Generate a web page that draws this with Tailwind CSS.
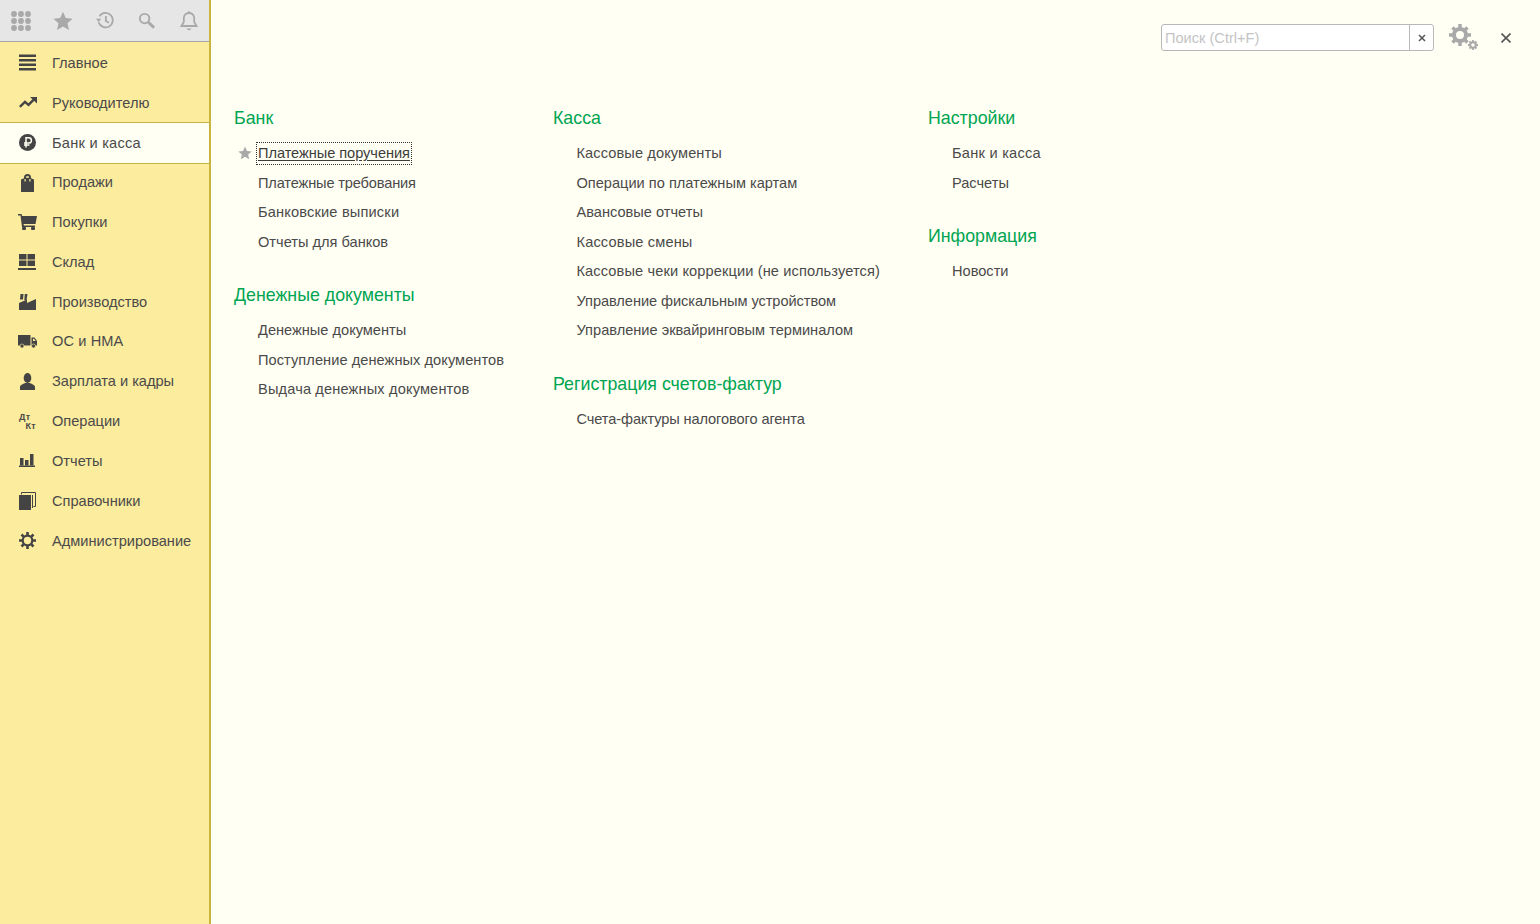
<!DOCTYPE html>
<html lang="ru">
  <head>
    <meta charset="UTF-8" />
    <meta name="viewport" content="width=device-width, initial-scale=1.0" />
    <title>Банк и касса</title>
    <script src="https://cdn.jsdelivr.net/npm/@tailwindcss/browser@4"></script>
  </head>
  <body class="h-[924px] w-[1540px] overflow-hidden bg-[#fffff4] font-['Liberation_Sans',Arial,sans-serif] text-[14.6px] text-[#4b4a4a]">
    <div class="flex h-full">
      <!-- Sidebar -->
      <aside class="flex h-full w-[211px] shrink-0 flex-col border-r-2 border-[#c9b43f] bg-[#fbec9e]">
        <div class="flex h-[42px] items-center border-b border-[#a5a5a5] bg-[#e6e6e6] text-[#a9a9a9]">
          <svg class="ml-[11px] h-[20px] w-[20px]" viewBox="0 0 20 20" fill="currentColor">
            <circle cx="3" cy="3" r="2.9"/><circle cx="10" cy="3" r="2.9"/><circle cx="17" cy="3" r="2.9"/>
            <circle cx="3" cy="10" r="2.9"/><circle cx="10" cy="10" r="2.9"/><circle cx="17" cy="10" r="2.9"/>
            <circle cx="3" cy="17" r="2.9"/><circle cx="10" cy="17" r="2.9"/><circle cx="17" cy="17" r="2.9"/>
          </svg>
          <svg class="ml-[22px] h-[20px] w-[20px]" viewBox="0 0 20 20" fill="currentColor"><path d="M10 .8l2.8 6.3 6.8.7-5.100 4.500 1.500 6.700L10 15.500l-6 3.500 1.500-6.700L.4 7.800l6.800-.7z"/></svg>
          <svg class="ml-[22px] h-[19px] w-[19px]" viewBox="0 0 21 20" fill="none" stroke="currentColor" stroke-width="2"><path d="M5 5.200A8 8 0 1 1 4 12"/><path d="M12 5v5.500l3.500 2"/><path d="M1 8.200h6L4 11.600z" fill="currentColor" stroke="none"/></svg>
          <svg class="ml-[24px] h-[17px] w-[18px]" viewBox="0 0 19 18" fill="none" stroke="currentColor"><circle cx="7" cy="7" r="5" stroke-width="2"/><path d="M11 11l6 5.500" stroke-width="3"/></svg>
          <svg class="ml-[24px] h-[20px] w-[18px]" viewBox="0 0 18 20" fill="none" stroke="currentColor" stroke-width="1.800"><path d="M9 2c-3.500 0-5.200 2.500-5.200 5.500v3.500L1.500 15h15l-2.300-4V7.500C14.200 4.500 12.500 2 9 2z"/><path d="M6.500 17.500a2.700 2.700 0 0 0 5 0z" fill="currentColor" stroke="none"/><circle cx="9" cy="1.500" r="1.300" fill="currentColor" stroke="none"/></svg>
        </div>
        <nav class="flex flex-col pt-[1px]">
          <a class="flex h-[39.800px] items-center">
            <svg class="ml-[19px] h-[17px] w-[17px] text-[#444]" viewBox="0 0 17 17" fill="currentColor"><rect y="0.500" width="17" height="2.500"/><rect y="5" width="17" height="2.500"/><rect y="9.500" width="17" height="2.500"/><rect y="14" width="17" height="2.500"/></svg>
            <span class="ml-[16px] pt-[2px]">Главное</span>
          </a>
          <a class="flex h-[39.400px] items-center">
            <svg class="ml-[19px] h-[11px] w-[18px] text-[#444]" viewBox="0 0 18 11" fill="none" stroke="currentColor" stroke-width="2.400"><path d="M.8 9.800L6 4.800l3.500 3 5-5"/><path d="M11 0h7v6.500z" fill="currentColor" stroke="none"/></svg>
            <span class="ml-[15px] pt-[2px]">Руководителю</span>
          </a>
          <a class="flex h-[41.400px] items-center border-y border-[#c9b43f] bg-[#fffff4]">
            <svg class="ml-[19px] h-[17px] w-[17px]" viewBox="0 0 17 17"><circle cx="8.500" cy="8.500" r="8.500" fill="#444"/><path d="M7 13.500V3.800h2.800a2.500 2.500 0 0 1 0 5.200H5M5 11h5.500" fill="none" stroke="#fffff4" stroke-width="1.500"/></svg>
            <span class="ml-[16px] pt-[2px] tracking-[0.25px]">Банк и касса</span>
          </a>
          <a class="flex h-[38.600px] items-center">
            <svg class="ml-[20px] h-[18px] w-[15px] text-[#444]" viewBox="0 0 15 18" fill="currentColor"><path d="M1 5.500l3-1.200V3.500a3.500 3.500 0 0 1 7 0v.8l3 1.200V18H1zM5.800 3.700l3.400 0a1.700 1.700 0 0 0-3.400 0z" fill-rule="evenodd"/><path d="M4.500 5v2.500h1.200V5zM9.300 5v2.500h1.200V5z" fill="#fbec9e"/></svg>
            <span class="ml-[17px]">Продажи</span>
          </a>
          <a class="flex h-[39.800px] items-center">
            <svg class="ml-[18px] h-[16px] w-[19px] text-[#444]" viewBox="0 0 19 16" fill="currentColor"><path d="M0 0h3.500l.7 2H19l-1.500 8H5.500L6 11.500h11V13H4L2.500 1.500H0z"/><rect x="4" y="13" width="4" height="3" rx="1"/><rect x="13" y="13" width="4" height="3" rx="1"/></svg>
            <span class="ml-[15px] pt-[2px] tracking-[0.1px]">Покупки</span>
          </a>
          <a class="flex h-[39.800px] items-center">
            <svg class="ml-[18px] h-[16px] w-[18px] text-[#444]" viewBox="0 0 18 16" fill="currentColor"><rect x="1" width="7.500" height="5.500"/><rect x="9.500" width="7.500" height="5.500"/><rect x="1" y="6.500" width="7.500" height="5.500"/><rect x="9.500" y="6.500" width="7.500" height="5.500"/><rect y="14" width="18" height="2"/></svg>
            <span class="ml-[16px] pt-[2px]">Склад</span>
          </a>
          <a class="flex h-[39.800px] items-center">
            <svg class="ml-[19px] h-[16px] w-[17px] text-[#444]" viewBox="0 0 17 16" fill="currentColor"><path d="M1.500 0h3L4 5.500H1zM5.800 0h2.700L7.500 6H5.300zM0 9l8-3.500V9l9-4v11H0z"/></svg>
            <span class="ml-[16px] pt-[2px]">Производство</span>
          </a>
          <a class="flex h-[39.800px] items-center">
            <svg class="ml-[18px] h-[13px] w-[19px] text-[#444]" viewBox="0 0 19 13" fill="currentColor"><path d="M0 0h12.500v10.500H0zM13.500 2.500h3L19 6v4.500h-5.500z"/><circle cx="4" cy="11" r="2" stroke="#fbec9e" stroke-width=".6"/><circle cx="15.500" cy="11" r="2" stroke="#fbec9e" stroke-width=".6"/><path d="M15 3.800h1l1.700 2.200H15z" fill="#fbec9e"/></svg>
            <span class="ml-[15px] tracking-[0.1px]">ОС и НМА</span>
          </a>
          <a class="flex h-[39.800px] items-center">
            <svg class="ml-[20px] h-[17px] w-[15px] text-[#444]" viewBox="0 0 15 17" fill="currentColor"><ellipse cx="7.500" cy="5" rx="3.800" ry="5"/><path d="M0 17v-3c0-2 3-3 5-4h5c2 1 5 2 5 4v3z"/></svg>
            <span class="ml-[17px] pt-[2px]">Зарплата и кадры</span>
          </a>
          <a class="flex h-[39.800px] items-center">
            <span class="ml-[19px] flex h-[17px] w-[17px] flex-col text-[9px] font-bold leading-[9px] tracking-[0.3px]"><span>Дт</span><span class="self-end">Кт</span></span>
            <span class="ml-[16px] pt-[2px]">Операции</span>
          </a>
          <a class="flex h-[39.800px] items-center">
            <svg class="ml-[19px] h-[13px] w-[16px] text-[#444]" viewBox="0 0 16 13" fill="currentColor"><rect x="1" y="4" width="3.500" height="7.500"/><rect x="6" y="6" width="3.500" height="5.500"/><rect x="11" y="0" width="3.500" height="11.500"/><rect y="11.500" width="16" height="1.500"/></svg>
            <span class="ml-[17px] pt-[2px]">Отчеты</span>
          </a>
          <a class="flex h-[39.800px] items-center">
            <svg class="ml-[19px] h-[18px] w-[17px] text-[#444]" viewBox="0 0 17 18" fill="none" stroke="currentColor"><rect x="0" y="3" width="12" height="15" fill="currentColor" stroke="none"/><path d="M2.500 2.500V.5h14v14h-2"/><path d="M13.500 3v13"/></svg>
            <span class="ml-[16px] pt-[2px]">Справочники</span>
          </a>
          <a class="flex h-[39.800px] items-center">
            <svg class="ml-[19px] h-[17px] w-[17px] text-[#444]" viewBox="0 0 17 17" fill="none" stroke="currentColor"><circle cx="8.500" cy="8.500" r="4.800" stroke-width="2.200"/><path d="M8.500 0v3M8.500 14v3M0 8.500h3M14 8.500h3M2.500 2.500l2.100 2.100M12.400 12.400l2.100 2.100M14.500 2.500l-2.100 2.100M4.600 12.400l-2.100 2.100" stroke-width="2.600"/></svg>
            <span class="ml-[16px] pt-[2px]">Администрирование</span>
          </a>
        </nav>
      </aside>

      <!-- Content -->
      <main class="flex min-w-0 flex-1 flex-col">
        <div class="flex h-[106px] items-start pt-[24px]">
          <div class="ml-[950px] flex h-[27px] w-[273px] rounded-[3px] border border-[#b8b8b8] bg-white">
            <div class="flex-1 border-r border-[#b8b8b8] pl-[3px] leading-[26px] text-[#c4c4c4]">Поиск (Ctrl+F)</div>
            <div class="flex w-[23px] items-center justify-center">
              <svg class="h-[8px] w-[8px] text-[#555]" viewBox="0 0 8 8" stroke="currentColor" stroke-width="1.500"><path d="M1 1l6 6M7 1L1 7"/></svg>
            </div>
          </div>
          <svg class="ml-[14px] h-[31px] w-[31px] text-[#a9a9a9]" viewBox="0 0 31 31" fill="none" stroke="currentColor">
            <circle cx="12" cy="11" r="6" stroke-width="4"/>
            <path d="M12 0v4M12 18v4M1 11h4M19 11h4M4.500 3.500l2.800 2.800M16.700 15.700l2.800 2.800M19.500 3.500l-2.800 2.800M7.300 15.700l-2.800 2.800" stroke-width="3.500"/>
            <circle cx="25" cy="21" r="2.800" stroke-width="2"/>
            <path d="M25 16v2M25 24v2M20 21h2M28 21h2M21.500 17.500l1.400 1.400M27.100 23.100l1.400 1.400M28.500 17.500l-1.400 1.400M22.900 23.100l-1.400 1.400" stroke-width="1.800"/>
          </svg>
          <svg class="ml-[22px] mt-[9px] h-[10px] w-[10px] text-[#555]" viewBox="0 0 10 10" stroke="currentColor" stroke-width="1.600"><path d="M.5.500l9 9M9.500.500l-9 9"/></svg>
        </div>

        <div class="flex pl-[23px]">
          <section class="w-[319px]">
            <h2 class="h-[25px] text-[17.800px] leading-[25px] text-[#00a551]">Банк</h2>
            <ul class="mt-[8px] pl-[24px]">
              <li class="relative h-[29.500px] leading-[29.500px]">
                <svg class="absolute -left-[20px] top-[7px] h-[14px] w-[14px] text-[#a9a9a9]" viewBox="0 0 20 20" fill="currentColor"><path d="M10 .8l2.800 6.300 6.800.7-5.100 4.500 1.500 6.700L10 15.500l-6 3.500 1.500-6.700L.4 7.800l6.800-.7z"/></svg>
                <span class="mt-[5px] inline-block align-top leading-[19px] tracking-[-0.05px] text-[#3c3c3c] underline underline-offset-2 outline-1 outline-offset-[1px] outline-dotted outline-[#333]">Платежные поручения</span>
              </li>
              <li class="h-[29.500px] leading-[29.500px] tracking-[-0.15px]">Платежные требования</li>
              <li class="h-[29.500px] leading-[29.500px] tracking-[0.17px]">Банковские выписки</li>
              <li class="h-[29.500px] leading-[29.500px]">Отчеты для банков</li>
            </ul>
            <h2 class="mt-[26.400px] h-[25px] text-[17.800px] leading-[25px] text-[#00a551]">Денежные документы</h2>
            <ul class="mt-[8px] pl-[24px]">
              <li class="h-[29.500px] leading-[29.500px]">Денежные документы</li>
              <li class="h-[29.500px] leading-[29.500px] tracking-[0.06px]">Поступление денежных документов</li>
              <li class="h-[29.500px] leading-[29.500px] tracking-[0.15px]">Выдача денежных документов</li>
            </ul>
          </section>
          <section class="w-[375px]">
            <h2 class="h-[25px] text-[17.800px] leading-[25px] text-[#00a551]">Касса</h2>
            <ul class="mt-[8px] pl-[23.500px]">
              <li class="h-[29.500px] leading-[29.500px] tracking-[0.1px]">Кассовые документы</li>
              <li class="h-[29.500px] leading-[29.500px]">Операции по платежным картам</li>
              <li class="h-[29.500px] leading-[29.500px]">Авансовые отчеты</li>
              <li class="h-[29.500px] leading-[29.500px] tracking-[0.15px]">Кассовые смены</li>
              <li class="h-[29.500px] leading-[29.500px] tracking-[0.12px]">Кассовые чеки коррекции (не используется)</li>
              <li class="h-[29.500px] leading-[29.500px] tracking-[-0.06px]">Управление фискальным устройством</li>
              <li class="h-[29.500px] leading-[29.500px]">Управление эквайринговым терминалом</li>
            </ul>
            <h2 class="mt-[26.700px] h-[25px] text-[17.800px] leading-[25px] text-[#00a551]">Регистрация счетов-фактур</h2>
            <ul class="mt-[8px] pl-[23.500px]">
              <li class="h-[29.500px] leading-[29.500px] tracking-[-0.1px]">Счета-фактуры налогового агента</li>
            </ul>
          </section>
          <section>
            <h2 class="h-[25px] text-[17.800px] leading-[25px] text-[#00a551]">Настройки</h2>
            <ul class="mt-[8px] pl-[24px]">
              <li class="h-[29.500px] leading-[29.500px] tracking-[0.25px]">Банк и касса</li>
              <li class="h-[29.500px] leading-[29.500px]">Расчеты</li>
            </ul>
            <h2 class="mt-[26.200px] h-[25px] text-[17.800px] leading-[25px] text-[#00a551]">Информация</h2>
            <ul class="mt-[8px] pl-[24px]">
              <li class="h-[29.500px] leading-[29.500px]">Новости</li>
            </ul>
          </section>
        </div>
      </main>
    </div>
  </body>
</html>
